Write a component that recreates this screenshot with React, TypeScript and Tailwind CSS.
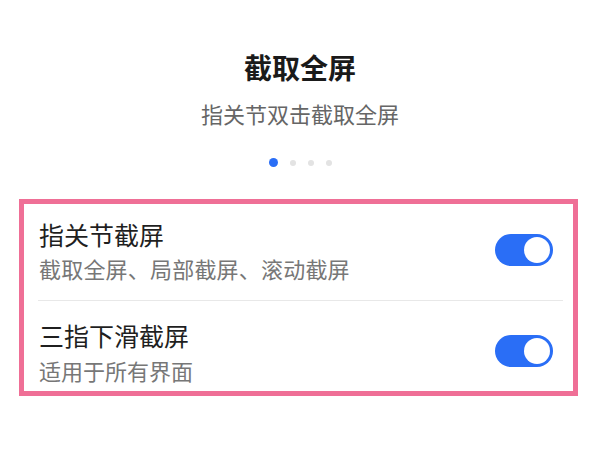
import React, { useState } from "react";

const Toggle: React.FC<{ on: boolean; onChange: () => void; className?: string }> = ({ on, onChange, className }) => (
  <button
    onClick={onChange}
    className={`relative h-[32px] w-[58px] shrink-0 rounded-full ${on ? "bg-[#2a6ef6]" : "bg-[#d6d6d6]"} ${className ?? ""}`}
  >
    <span
      className={`absolute top-[3px] h-[26px] w-[26px] rounded-full bg-white ${on ? "right-[3px]" : "left-[3px]"}`}
    />
  </button>
);

const App: React.FC = () => {
  const [knuckle, setKnuckle] = useState(true);
  const [threeFinger, setThreeFinger] = useState(true);

  return (
    <div className="min-h-screen bg-white font-['Noto_Sans_CJK_SC','Noto_Sans',sans-serif]">
      <h1 className="pt-[50px] text-center text-[28px] font-bold leading-[34px] text-[#1a1a1a]">截取全屏</h1>
      <p className="mt-[14px] text-center text-[22px] leading-[30px] text-[#666666]">指关节双击截取全屏</p>

      <div className="mt-[30px] flex items-center justify-center gap-[12px]">
        <span className="h-[9px] w-[9px] rounded-full bg-[#2a6ef6]" />
        <span className="h-[6px] w-[6px] rounded-full bg-[#e3e3e3]" />
        <span className="h-[6px] w-[6px] rounded-full bg-[#e3e3e3]" />
        <span className="h-[6px] w-[6px] rounded-full bg-[#e3e3e3]" />
      </div>

      <div className="ml-[19px] mr-[22px] mt-[32px] border-[5px] border-[#ef6f96]">
        <div className="flex items-start pl-[15px] pr-[20px] pt-[15px] pb-[18px]">
          <div className="flex-1">
            <div className="text-[25px] leading-[30px] text-[#1f1f1f]">指关节截屏</div>
            <div className="mt-[5px] text-[22px] leading-[28px] tracking-[0.2px] text-[#777777]">截取全屏、局部截屏、滚动截屏</div>
          </div>
          <Toggle on={knuckle} onChange={() => setKnuckle(!knuckle)} className="mt-[15px]" />
        </div>
        <div className="ml-[14px] mr-[10px] h-px bg-[#e8e8e8]" />
        <div className="flex items-start pl-[15px] pr-[20px] pt-[19px] pb-[7px]">
          <div className="flex-1">
            <div className="text-[25px] leading-[30px] text-[#1f1f1f]">三指下滑截屏</div>
            <div className="mt-[6px] text-[22px] leading-[28px] text-[#777777]">适用于所有界面</div>
          </div>
          <Toggle on={threeFinger} onChange={() => setThreeFinger(!threeFinger)} className="mt-[15px]" />
        </div>
      </div>
    </div>
  );
};

export default App;
